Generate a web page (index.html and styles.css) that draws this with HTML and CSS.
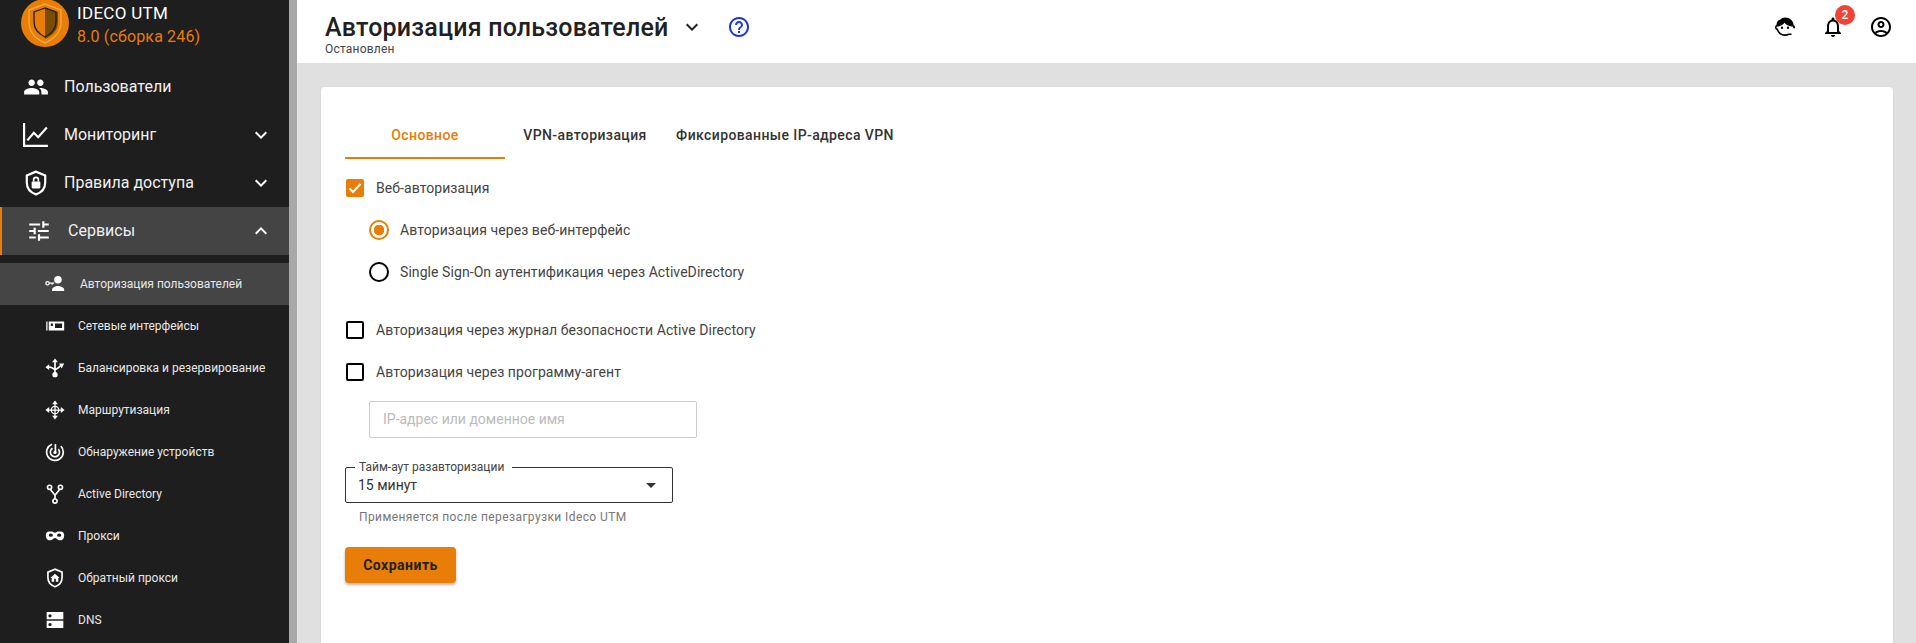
FILE: index.html
```html
<!DOCTYPE html>
<html lang="ru">
<head>
    <meta charset="utf-8">
    <title>Авторизация пользователей</title>
    <link rel="stylesheet" href="styles.css">
</head>
<body>
    <aside class="sidebar">
        <div class="brand">
            <svg class="brand-logo" viewBox="0 0 48 48">
                <circle cx="24" cy="24" r="24" fill="#e87d07"/>
                <path d="M24 5 L8 11 V23 C8 33 15 40 24 44 C33 40 40 33 40 23 V11 Z" fill="none" stroke="#f9a53a" stroke-width="1.400"/>
                <path d="M24 9 L37 13 V23 C37 31 32 36 24 40 Z" fill="#7a4c00"/>
                <path d="M24 9 L13 13 V23 C13 30 18 35 24 38 C30 35 35 30 35 23 V13 Z" fill="none" stroke="#1c1c1c" stroke-width="1.300"/>
            </svg>
            <div class="brand-text">
                <div class="brand-name">IDECO UTM</div>
                <div class="brand-version">8.0 (сборка 246)</div>
            </div>
        </div>

        <nav>
            <a class="nav-item">
                <svg class="nav-icon" viewBox="0 0 24 24"><path d="M16 11c1.660 0 2.990-1.340 2.990-3S17.660 5 16 5c-1.660 0-3 1.340-3 3s1.340 3 3 3zm-8 0c1.660 0 2.990-1.340 2.990-3S9.660 5 8 5C6.340 5 5 6.340 5 8s1.340 3 3 3zm0 2c-2.330 0-7 1.170-7 3.500V19h14v-2.500c0-2.330-4.670-3.500-7-3.500zm8 0c-.29 0-.62.02-.97.05 1.160.84 1.970 1.970 1.970 3.450V19h6v-2.500c0-2.330-4.670-3.500-7-3.500z"/></svg>
                <span>Пользователи</span>
            </a>
            <a class="nav-item">
                <svg class="nav-icon" viewBox="0 0 24 24"><path class="line" d="M1 1v21h22M4 17l6-7 4 4 8-9"/></svg>
                <span>Мониторинг</span>
                <svg class="nav-arrow" viewBox="0 0 24 24"><path d="M16.590 8.590L12 13.170 7.410 8.590 6 10l6 6 6-6z"/></svg>
            </a>
            <a class="nav-item">
                <svg class="nav-icon" viewBox="0 0 24 24"><path class="line" d="M12 1.500L3.500 5v6.500c0 5.300 3.500 9.300 8.500 11 5-1.700 8.500-5.700 8.500-11V5z"/><rect x="8" y="10.500" width="8" height="6.500" rx="1"/><path class="thin" d="M9.800 10.500V9a2.200 2.200 0 0 1 4.400 0v1.500"/></svg>
                <span>Правила доступа</span>
                <svg class="nav-arrow" viewBox="0 0 24 24"><path d="M16.590 8.590L12 13.170 7.410 8.590 6 10l6 6 6-6z"/></svg>
            </a>
            <a class="nav-item nav-open">
                <svg class="nav-icon" viewBox="0 0 24 24"><path d="M3 17v2h6v-2H3zM3 5v2h10V5H3zm10 16v-2h8v-2h-8v-2h-2v6h2zM7 9v2H3v2h4v2h2V9H7zm14 4v-2H11v2h10zm-6-4h2V7h4V5h-4V3h-2v6z"/></svg>
                <span>Сервисы</span>
                <svg class="nav-arrow" viewBox="0 0 24 24"><path d="M12 8l-6 6 1.410 1.410L12 10.830l4.590 4.580L18 14z"/></svg>
            </a>

            <div class="subnav">
                <a class="sub-item sub-active">
                    <svg class="sub-icon" viewBox="0 0 24 24"><circle class="thin" cx="3" cy="11" r="2"/><path class="thin" d="M5 11h6M8.500 11v2"/><circle cx="15.500" cy="7" r="4.500"/><path d="M8.500 19c0-3 4.500-4.500 7-4.500s7.500 1.500 7.500 4.500v1.500H8.500z"/></svg>
                    <span>Авторизация пользователей</span>
                </a>
                <a class="sub-item">
                    <svg class="sub-icon" viewBox="0 0 24 24"><path d="M1.500 6.500h1.500v11H1.500zM4.500 6.500H23v11H4.500zM7 9v3h2.500V9zm5 0v5.500h8.500V9z" fill-rule="evenodd"/></svg>
                    <span>Сетевые интерфейсы</span>
                </a>
                <a class="sub-item">
                    <svg class="sub-icon" viewBox="0 0 24 24"><path class="line" d="M12 4v14M4 11h1.500c3 0 4.500 2 6.500 3 2-.5 4-2 6.500-4.500"/><path d="M12 .5L8.500 5h7zM.5 11L5 7.500v7zM23 6.500h-6l3 6z"/><circle cx="12" cy="20" r="3.200"/></svg>
                    <span>Балансировка и резервирование</span>
                </a>
                <a class="sub-item">
                    <svg class="sub-icon" viewBox="0 0 24 24"><path class="thin" d="M12 3v18M3 12h18"/><circle class="thin" cx="12" cy="12" r="4.500"/><path d="M12 .5L8.500 5h7zM12 23.500L8.500 19h7zM.5 12L5 8.500v7zM23.500 12L19 8.500v7z"/></svg>
                    <span>Маршрутизация</span>
                </a>
                <a class="sub-item">
                    <svg class="sub-icon" viewBox="0 0 24 24"><path class="line" d="M8.500 2.700A10 10 0 1 0 19 5"/><path class="line" d="M9 7.500a5.500 5.500 0 1 0 7 1"/><path class="line" d="M12.500 2.500V12"/><circle cx="12" cy="12.500" r="2"/></svg>
                    <span>Обнаружение устройств</span>
                </a>
                <a class="sub-item">
                    <svg class="sub-icon" viewBox="0 0 24 24"><circle class="line" cx="5.500" cy="4" r="2.500"/><circle class="line" cx="18.500" cy="4" r="2.500"/><circle class="line" cx="12" cy="20.500" r="2.500"/><path class="line" d="M6.500 6.500L12 13.500l5.500-7M12 13.500V18"/></svg>
                    <span>Active Directory</span>
                </a>
                <a class="sub-item">
                    <svg class="sub-icon" viewBox="0 0 24 24"><path fill-rule="evenodd" d="M5 6.500h3.500c1.500 0 2.500 1.500 3.500 1.500s2-1.500 3.500-1.500H19c2.500 0 4 2 4 4.500 0 3-1.500 6-4 6h-2c-2 0-3.500-2.500-5-2.500S9 17 7 17H5c-2.500 0-4-3-4-6 0-2.500 1.500-4.500 4-4.500zM4.500 11a2.500 2 0 1 0 5 0 2.500 2 0 1 0-5 0zm10 0a2.500 2 0 1 0 5 0 2.500 2 0 1 0-5 0z"/></svg>
                    <span>Прокси</span>
                </a>
                <a class="sub-item">
                    <svg class="sub-icon" viewBox="0 0 24 24"><path class="line" d="M12 1.500L3.500 5v6.500c0 5.300 3.500 9.300 8.500 11 5-1.700 8.500-5.700 8.500-11V5z"/><path d="M12 7l-5.500 5H8v4.500h3V13h2v3.500h3V12h1.500z"/></svg>
                    <span>Обратный прокси</span>
                </a>
                <a class="sub-item">
                    <svg class="sub-icon" viewBox="0 0 24 24"><path d="M22 13H2v8.500h20zM6 19.500a2 2 0 1 1 0-4 2 2 0 0 1 0 4zM22 2.500H2V11h20zM6 9a2 2 0 1 1 0-4 2 2 0 0 1 0 4z" fill-rule="evenodd"/></svg>
                    <span>DNS</span>
                </a>
            </div>
        </nav>
    </aside>

    <div class="main">
        <header class="topbar">
            <div class="title-block">
                <div class="title-row">
                    <h1>Авторизация пользователей</h1>
                    <svg class="title-arrow" viewBox="0 0 24 24"><path d="M16.590 8.590L12 13.170 7.410 8.590 6 10l6 6 6-6z"/></svg>
                    <svg class="help-icon" viewBox="0 0 24 24"><path d="M11 18h2v-2h-2v2zm1-16C6.480 2 2 6.480 2 12s4.480 10 10 10 10-4.480 10-10S17.520 2 12 2zm0 18c-4.410 0-8-3.590-8-8s3.590-8 8-8 8 3.590 8 8-3.590 8-8 8zm0-14c-2.210 0-4 1.790-4 4h2c0-1.100.9-2 2-2s2 .9 2 2c0 2-3 1.750-3 5h2c0-2.250 3-2.500 3-5 0-2.210-1.790-4-4-4z"/></svg>
                </div>
                <div class="status">Остановлен</div>
            </div>
            <div class="top-actions">
                <div class="top-btn">
                    <svg viewBox="0 0 24 24"><path fill-rule="evenodd" d="M12 2.500c-2 0-3.500.8-4.500 2C5 4.800 3.500 7.500 3.500 10c-1 .6-1.500 1.500-1.500 2.500 0 1.200.7 2.200 1.800 2.600C5 18.800 8.200 21 12 21c1.500 0 2.900-.3 4.100-.9h2.400v-1.600h-3.100c-1 .5-2.200.8-3.400.8-3.300 0-6-2-6.800-5l-.2-.7h-.7c-.5 0-.8-.4-.8-1.100 0-.5.300-.9.800-1 2.500-.2 5.500-1.500 7.200-3.800 1.500 2 4.500 3.500 7 3.700l.8.100c.6.100.8.500.8 1 0 .2 0 .5-.1.700H22c0-.2.100-.5.100-.7 0-1-.5-1.900-1.500-2.500C20.500 6 17 2.500 12 2.500zM9 11.500a1.200 1.200 0 1 0 0 2.400 1.200 1.200 0 0 0 0-2.400zm6 0a1.200 1.200 0 1 0 0 2.400 1.200 1.200 0 0 0 0-2.400z"/></svg>
                </div>
                <div class="top-btn">
                    <svg viewBox="0 0 24 24"><path d="M12 22c1.100 0 2-.9 2-2h-4c0 1.100.9 2 2 2zm6-6v-5c0-3.070-1.630-5.640-4.500-6.320V4c0-.83-.67-1.500-1.500-1.500s-1.500.67-1.500 1.500v.68C7.640 5.360 6 7.920 6 11v5l-2 2v1h16v-1l-2-2zm-2 1H8v-6c0-2.480 1.510-4.500 4-4.500s4 2.020 4 4.500v6z"/></svg>
                    <span class="badge">2</span>
                </div>
                <div class="top-btn">
                    <svg viewBox="0 0 24 24"><path d="M12 2C6.480 2 2 6.480 2 12s4.480 10 10 10 10-4.480 10-10S17.520 2 12 2zM7.350 18.500C8.660 17.560 10.260 17 12 17s3.340.56 4.650 1.500c-1.310.94-2.910 1.500-4.650 1.500s-3.340-.56-4.650-1.500zm10.790-1.380C16.450 15.800 14.320 15 12 15s-4.450.8-6.140 2.120C4.700 15.730 4 13.950 4 12c0-4.420 3.580-8 8-8s8 3.580 8 8c0 1.950-.7 3.730-1.860 5.120zM12 6c-1.930 0-3.500 1.570-3.500 3.500S10.070 13 12 13s3.500-1.570 3.500-3.500S13.930 6 12 6zm0 5c-.83 0-1.500-.67-1.500-1.500S11.170 8 12 8s1.500.67 1.500 1.500S12.830 11 12 11z"/></svg>
                </div>
            </div>
        </header>

        <div class="content">
            <section class="card">
                <div class="tabs">
                    <div class="tab tab-active">Основное</div>
                    <div class="tab">VPN-авторизация</div>
                    <div class="tab tab-wide">Фиксированные IP-адреса VPN</div>
                </div>

                <form class="form" onsubmit="return false;">
                    <label class="row">
                        <span class="check checked">
                            <svg viewBox="0 0 18 18"><path d="M3.500 9.500l3.500 3.500 7.500-8" fill="none" stroke="#fff" stroke-width="2"/></svg>
                        </span>
                        Веб-авторизация
                    </label>
                    <label class="row row-indent">
                        <span class="radio radio-on"></span>
                        Авторизация через веб-интерфейс
                    </label>
                    <label class="row row-indent">
                        <span class="radio"></span>
                        Single Sign-On аутентификация через ActiveDirectory
                    </label>

                    <label class="row row-gap">
                        <span class="check"></span>
                        Авторизация через журнал безопасности Active Directory
                    </label>
                    <label class="row">
                        <span class="check"></span>
                        Авторизация через программу-агент
                    </label>

                    <div class="text-input">IP-адрес или доменное имя</div>

                    <div class="select">
                        <span class="select-label">Тайм-аут разавторизации</span>
                        <span>15 минут</span>
                        <span class="select-arrow"></span>
                    </div>
                    <div class="helper">Применяется после перезагрузки Ideco UTM</div>

                    <button class="save" type="submit">Сохранить</button>
                </form>
            </section>
        </div>
    </div>
</body>
</html>
```

FILE: styles.css
```css
* {
    box-sizing: border-box;
}

html,
body {
    height: 100%;
}

body {
    margin: 0;
    display: flex;
    overflow: hidden;
    font-family: Roboto, "Liberation Sans", sans-serif;
    background-color: #e0e0e0;
    color: #333;
}

/* sidebar */

.sidebar {
    flex: 0 0 297px;
    background-color: #1e1e1e;
    border-right: 8px solid #a8a8a8;
    color: #fff;
    overflow: hidden;
}

.brand {
    display: flex;
    height: 63px;
    padding-left: 21px;
}

.brand-logo {
    width: 48px;
    height: 48px;
    margin-top: -1px;
}

.brand-text {
    margin-left: 8px;
    padding-top: 1px;
}

.brand-name {
    font-size: 17px;
    letter-spacing: 0.3px;
    line-height: 24px;
}

.brand-version {
    font-size: 16px;
    letter-spacing: 0.15px;
    line-height: 24px;
    color: #e87d07;
}

.nav-item {
    display: flex;
    align-items: center;
    height: 48px;
    padding: 0 16px 0 23px;
    font-size: 16px;
    color: #f0f0f0;
}

.nav-item span {
    flex: 1;
    margin: -2px 0 0 15px;
}

.nav-open {
    background-color: #444;
    border-left: 2px solid #e87d07;
    padding-left: 24px;
}

.nav-open span {
    margin-left: 16px;
}

.nav-icon {
    width: 26px;
    height: 26px;
    fill: #fff;
}

.nav-arrow {
    width: 24px;
    height: 24px;
    fill: #fff;
}

.line {
    fill: none;
    stroke: #fff;
    stroke-width: 2;
}

.thin {
    fill: none;
    stroke: #fff;
    stroke-width: 1.5;
}

.subnav {
    padding-top: 8px;
}

.sub-item {
    display: flex;
    align-items: center;
    height: 42px;
    padding-left: 45px;
    font-size: 12px;
    color: #e8e8e8;
}

.sub-item span {
    margin-left: 13px;
}

.sub-active {
    background-color: #454545;
}

.sub-active span {
    margin-left: 15px;
}

.sub-icon {
    width: 20px;
    height: 20px;
    fill: #fff;
}

/* top bar */

.main {
    display: flex;
    flex-direction: column;
    flex: 1;
    min-width: 0;
    height: 100%;
    overflow: hidden;
}

.topbar {
    display: flex;
    flex: 0 0 63px;
    justify-content: space-between;
    padding: 0 23px 0 28px;
    background-color: #fff;
}

.title-row {
    display: flex;
    align-items: center;
    height: 39px;
    padding-top: 15px;
}

h1 {
    margin: 0;
    font-size: 25px;
    font-weight: 500;
    letter-spacing: 0.2px;
    color: #212121;
}

.title-arrow {
    width: 24px;
    height: 24px;
    margin-left: 12px;
    fill: #222;
}

.help-icon {
    width: 24px;
    height: 24px;
    margin-left: 23px;
    fill: #1a35e0;
}

.status {
    margin-top: 3px;
    font-size: 12px;
    letter-spacing: 0.2px;
    line-height: 14px;
    color: #444;
}

.top-actions {
    display: flex;
    gap: 24px;
    padding-top: 15px;
}

.top-btn {
    position: relative;
    width: 24px;
    height: 24px;
}

.top-btn svg {
    display: block;
    fill: #000;
}

.badge {
    position: absolute;
    top: -10px;
    left: 14px;
    width: 20px;
    height: 20px;
    border-radius: 50%;
    background-color: #f44336;
    color: #fff;
    font-size: 12px;
    font-weight: 500;
    line-height: 20px;
    text-align: center;
}

/* content */

.content {
    display: flex;
    flex: 1;
    padding: 24px 23px 0 24px;
}

.card {
    flex: 1;
    padding: 24px;
    border-radius: 4px 4px 0 0;
    background-color: #fff;
    box-shadow: 0 1px 2px rgba(0, 0, 0, 0.1);
}

.tabs {
    display: flex;
    height: 48px;
}

.tab {
    width: 160px;
    padding-top: 16px;
    text-align: center;
    font-size: 14px;
    font-weight: 500;
    letter-spacing: 0.4px;
    color: #333;
}

.tab-wide {
    width: 240px;
}

.tab-active {
    color: #e87d07;
    border-bottom: 2px solid #e87d07;
}

.form {
    padding-top: 8px;
}

.row {
    display: flex;
    align-items: center;
    height: 42px;
    padding-left: 1px;
    font-size: 14px;
    letter-spacing: 0.07px;
    color: #444;
}

.row-indent {
    padding-left: 24px;
}

.row-gap {
    margin-top: 16px;
}

.check {
    width: 18px;
    height: 18px;
    margin-right: 12px;
    border: 2px solid #000;
    border-radius: 2px;
}

.checked {
    background-color: #e87d07;
    border: 0;
}

.check svg {
    display: block;
}

.radio {
    width: 20px;
    height: 20px;
    margin-right: 11px;
    border: 2px solid #000;
    border-radius: 50%;
}

.radio-on {
    border-color: #e87d07;
    background: radial-gradient(circle, #e87d07 0, #e87d07 5px, #fff 5.5px);
}

.text-input {
    width: 328px;
    height: 37px;
    margin: 8px 0 0 24px;
    padding-left: 13px;
    border: 1px solid #ccc;
    border-radius: 2px;
    font-size: 14px;
    line-height: 35px;
    color: #bbb;
}

.select {
    position: relative;
    display: flex;
    align-items: center;
    width: 328px;
    height: 36px;
    margin-top: 29px;
    padding: 0 12px;
    border: 1px solid #333;
    border-radius: 2px;
    font-size: 14px;
    color: #333;
}

.select-label {
    position: absolute;
    top: -8px;
    left: 9px;
    padding: 0 8px 0 4px;
    background-color: #fff;
    font-size: 12px;
    line-height: 14px;
    color: #444;
}

.select-arrow {
    position: absolute;
    top: 15px;
    right: 16px;
    border-top: 5px solid #333;
    border-left: 5px solid transparent;
    border-right: 5px solid transparent;
}

.helper {
    margin: 7px 0 0 14px;
    font-size: 12px;
    letter-spacing: 0.4px;
    line-height: 14px;
    color: #777;
}

.save {
    display: block;
    width: 111px;
    height: 36px;
    margin-top: 23px;
    padding: 0;
    border: none;
    border-radius: 4px;
    background-color: #e87d07;
    box-shadow: 0 2px 3px rgba(0, 0, 0, 0.3);
    font-family: inherit;
    font-size: 14px;
    font-weight: 700;
    letter-spacing: 0.5px;
    color: #222;
}
```
